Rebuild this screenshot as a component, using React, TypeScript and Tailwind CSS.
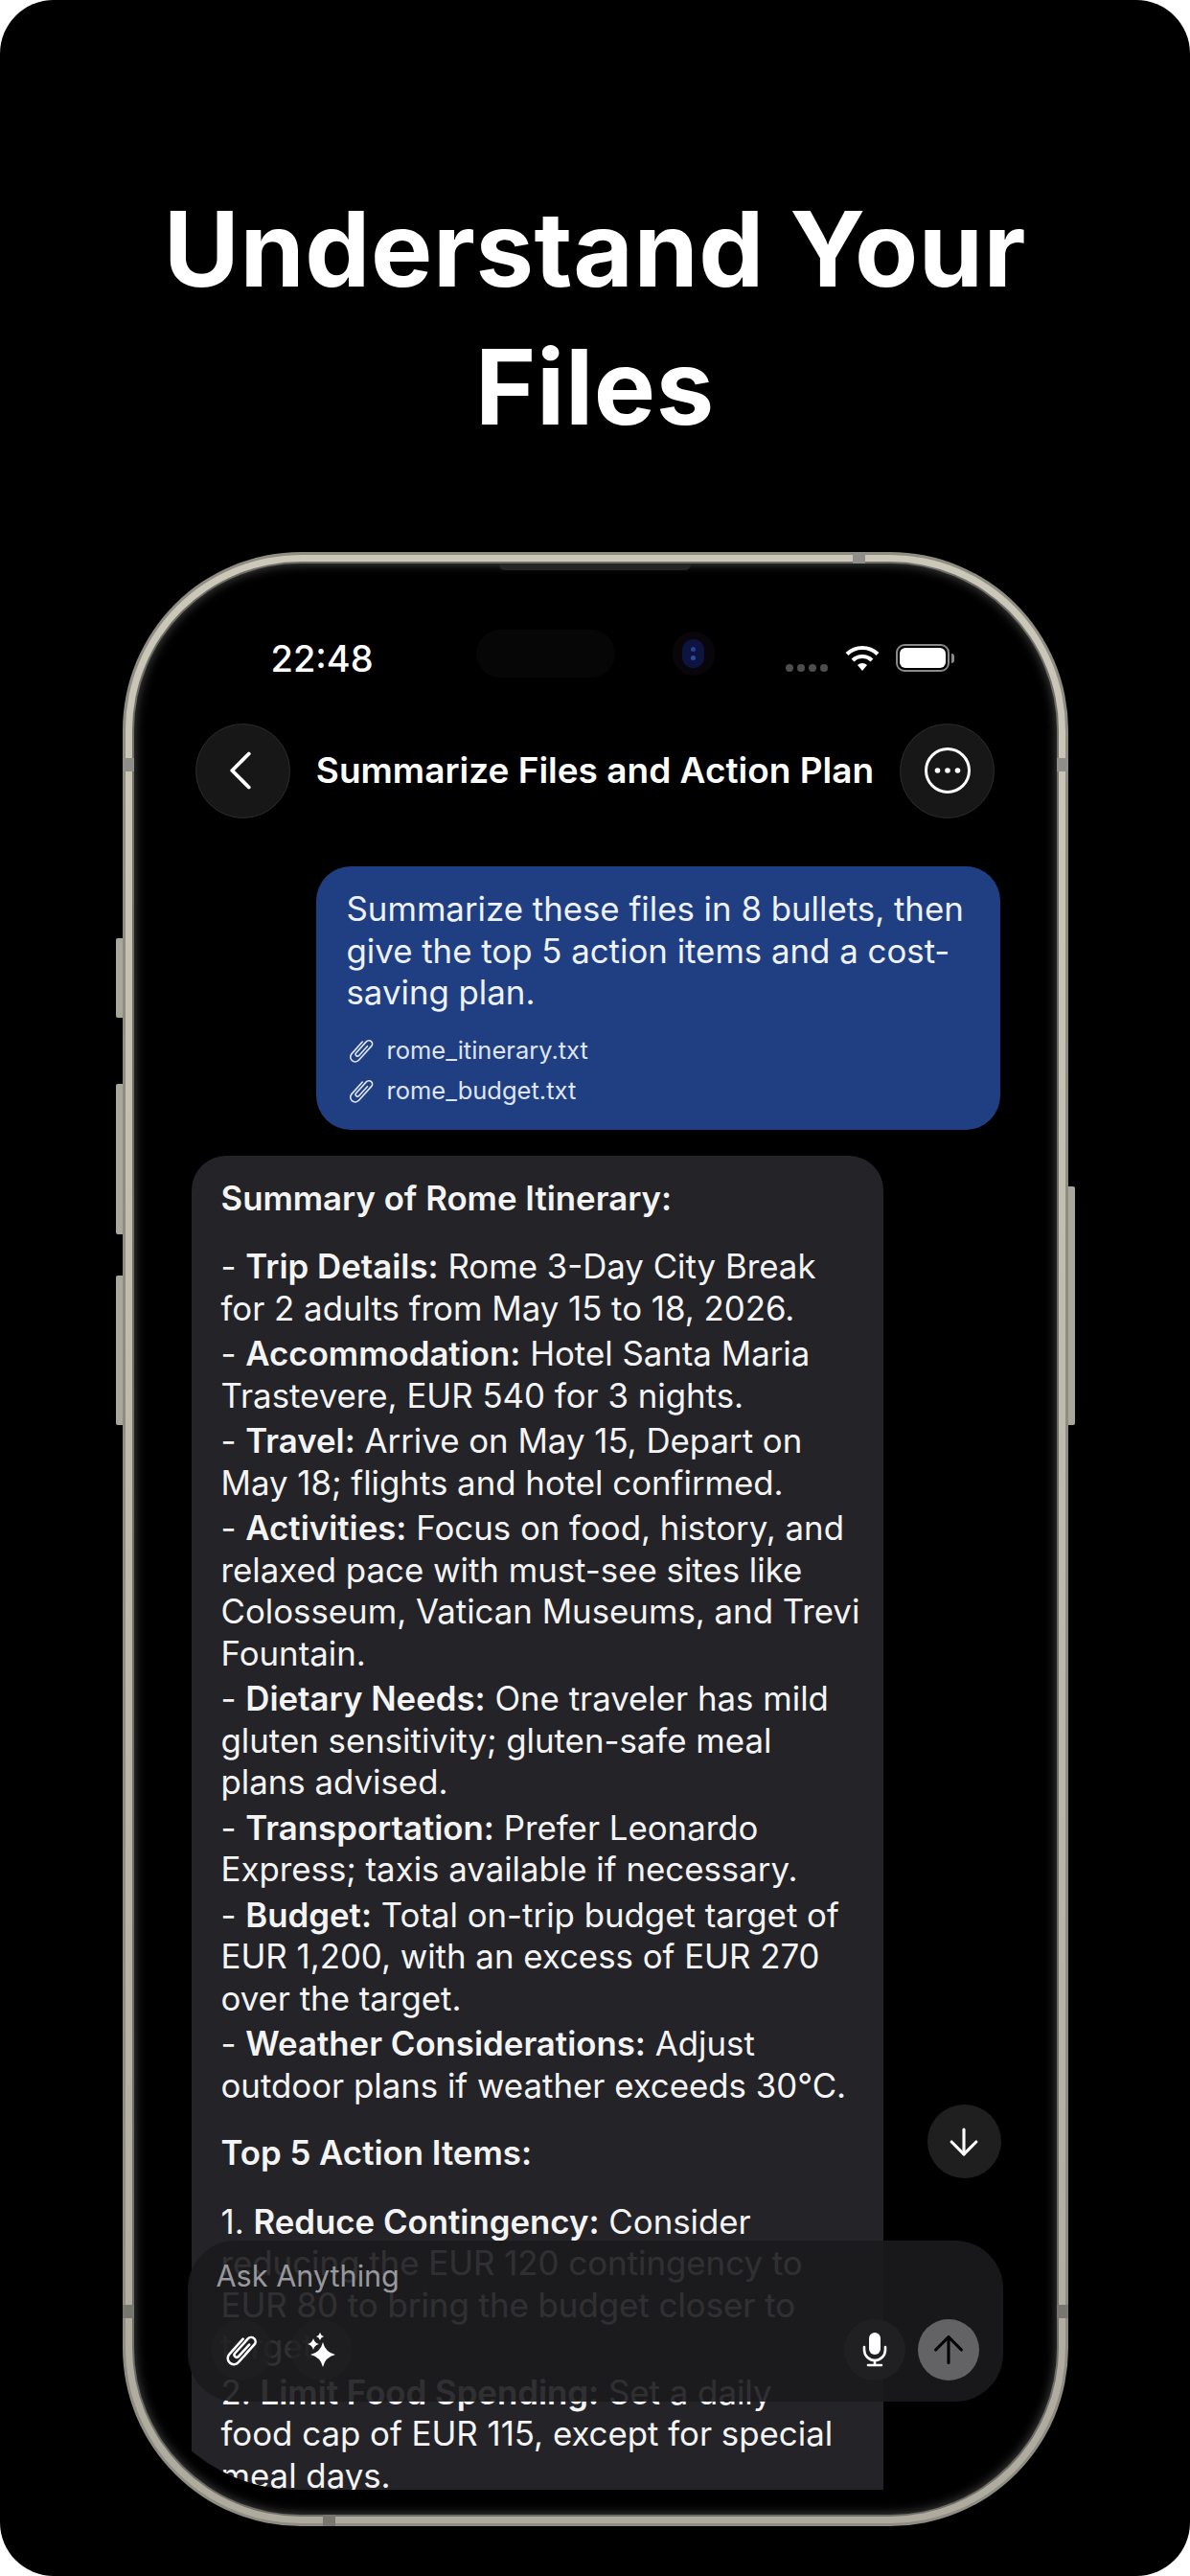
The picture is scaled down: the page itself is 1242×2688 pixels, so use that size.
import React from 'react';
import { ArrowDown, ArrowUp, ChevronLeft } from 'lucide-react';

function PaperclipIcon({ className, strokeWidth = 1.3 }: { className: string; strokeWidth?: number }) {
  return (
    <svg viewBox="0 0 24 24" fill="none" stroke="currentColor" strokeWidth={strokeWidth} strokeLinecap="round" className={className}>
      <path transform="rotate(42 12 12)" d="M13.5 6V16.5a1.6 1.6 0 0 1-3.2 0V3.7a2.85 2.85 0 0 1 5.7 0V19.5a4 4 0 0 1-8 0V6" />
    </svg>
  );
}

function SparkleIcon() {
  return (
    <svg viewBox="0 0 32 36" fill="white" className="w-[32px] h-[36px]">
      <path d="M18 10Q20.5 20.5 31 23Q20.5 25.5 18 36Q15.5 25.5 5 23Q15.5 20.5 18 10Z" />
      <path d="M8 6Q9.2 10.8 14 12Q9.2 13.2 8 18Q6.8 13.2 2 12Q6.8 10.8 8 6Z" />
      <path d="M15 0Q15.8 3.2 19 4Q15.8 4.8 15 8Q14.2 4.8 11 4Q14.2 3.2 15 0Z" />
    </svg>
  );
}

function MicIcon() {
  return (
    <svg viewBox="0 0 26 36" fill="none" className="w-[26px] h-[36px]">
      <rect x="7" y="0" width="12" height="23" rx="6" fill="white" />
      <path d="M2 15v3a11 11 0 0 0 22 0v-3" stroke="white" strokeWidth="2.6" strokeLinecap="round" />
      <path d="M13 29v4M6 34h14" stroke="white" strokeWidth="2.6" strokeLinecap="round" />
    </svg>
  );
}

function WifiIcon() {
  return (
    <svg viewBox="0 0 36 28" fill="none" stroke="white" strokeWidth="4.2" className="w-[36px] h-[28px]">
      <path d="M2 9.5a23 23 0 0 1 32 0" />
      <path d="M8 16a14.5 14.5 0 0 1 20 0" />
      <path d="M18 27l-5-6a7 7 0 0 1 10 0z" fill="white" stroke="none" />
    </svg>
  );
}

function MoreIcon() {
  return (
    <svg viewBox="0 0 50 50" fill="none" className="w-[50px] h-[50px]">
      <circle cx="25" cy="25" r="22.5" stroke="white" strokeWidth="3" />
      <circle cx="14.5" cy="25" r="2.8" fill="white" />
      <circle cx="25" cy="25" r="2.8" fill="white" />
      <circle cx="35.5" cy="25" r="2.8" fill="white" />
    </svg>
  );
}

function Item({ label, children, first }: { label: string; children: React.ReactNode; first?: boolean }) {
  return (
    <p className={first ? '' : 'mt-[4px]'}>
      - <b className="font-semibold">{label}</b> {children}
    </p>
  );
}

export default function App() {
  return (
    <div className="w-[1242px] h-[2688px] bg-white overflow-hidden">
      <div className="relative h-full bg-black rounded-[56px] flex flex-col items-center">
        <h1 className="mt-[188px] text-center text-white font-bold text-[108px] tracking-[0.6px] leading-[144px] font-['Inter',sans-serif]">
          Understand Your
          <br />
          Files
        </h1>

        <div className="relative mt-[100px] w-[987px] h-[2060px]">
          {/* side buttons */}
          <div className="absolute left-[-7px] top-[403px] w-[8px] h-[83px] rounded-l-[2px] bg-[#a9a69a]" />
          <div className="absolute left-[-7px] top-[555px] w-[8px] h-[157px] rounded-l-[2px] bg-[#a9a69a]" />
          <div className="absolute left-[-7px] top-[755px] w-[8px] h-[156px] rounded-l-[2px] bg-[#a9a69a]" />
          <div className="absolute right-[-7px] top-[662px] w-[8px] h-[249px] rounded-r-[2px] bg-[#a9a69a]" />

          {/* titanium frame */}
          <div className="relative h-full rounded-[186px] bg-[#8f8d82] p-[3px]">
            <div className="h-full rounded-[183px] bg-gradient-to-b from-[#cbc8ba] to-[#aeab9e] p-[7px]">
              <div className="h-full rounded-[176px] bg-[#6f6e66] p-[2px]">
                <div className="relative h-full rounded-[174px] bg-black flex flex-col pb-[26px] shadow-[inset_0_0_12px_rgba(255,255,255,0.3)]">
                  {/* earpiece */}
                  <div className="absolute left-[381px] top-0 w-[200px] h-[7px] rounded-b-[6px] bg-[#262624]" />

                  {/* status bar */}
                  <div className="relative h-[166px] shrink-0">
                    <span className="absolute left-[143px] top-[77px] text-white text-[38px] leading-[44px] font-medium font-['Inter',sans-serif]">22:48</span>
                    <div className="absolute left-[357px] top-[69px] w-[145px] h-[50px] rounded-full bg-[#060606]" />
                    <div className="absolute left-[562px] top-[71px] w-[44px] h-[46px] rounded-full bg-[#09060b] flex items-center justify-center">
                      <div className="w-[23px] h-[30px] rounded-full bg-[#0d1440] flex flex-col items-center justify-center gap-[4px]">
                        <div className="w-[5px] h-[5px] rounded-full bg-[#2c3f99]" />
                        <div className="w-[5px] h-[5px] rounded-full bg-[#2c4f99]" />
                      </div>
                    </div>
                    <div className="absolute left-[680px] top-[105px] flex gap-[4px]">
                      <div className="w-[8px] h-[8px] rounded-full bg-[#4d4d4d]" />
                      <div className="w-[8px] h-[8px] rounded-full bg-[#4d4d4d]" />
                      <div className="w-[8px] h-[8px] rounded-full bg-[#4d4d4d]" />
                      <div className="w-[8px] h-[8px] rounded-full bg-[#4d4d4d]" />
                    </div>
                    <div className="absolute left-[742px] top-[85px]">
                      <WifiIcon />
                    </div>
                    <div className="absolute left-[795px] top-[84px] flex items-center">
                      <div className="w-[56px] h-[29px] rounded-[9px] border-2 border-[#8a8a8a] p-[2px]">
                        <div className="h-full rounded-[6px] bg-white" />
                      </div>
                      <div className="w-[3px] h-[10px] ml-[2px] rounded-r-full bg-[#8a8a8a]" />
                    </div>
                  </div>

                  {/* header */}
                  <div className="flex items-center justify-between px-[64px] h-[100px] shrink-0">
                    <button className="w-[99px] h-[99px] rounded-full bg-[#171717] border border-[#2b2b2b] flex items-center justify-center">
                      <ChevronLeft className="w-[70px] h-[70px] shrink-0 text-white mr-[4px]" strokeWidth={1.3} />
                    </button>
                    <span className="text-white text-[37px] leading-[44px] font-semibold font-['Inter',sans-serif]">Summarize Files and Action Plan</span>
                    <button className="w-[99px] h-[99px] rounded-full bg-[#171717] border border-[#2b2b2b] flex items-center justify-center">
                      <MoreIcon />
                    </button>
                  </div>

                  {/* messages */}
                  <div className="flex-1 min-h-0 overflow-hidden rounded-b-[170px] pt-[50px] pl-[60px] pr-[59px] flex flex-col font-['Inter',sans-serif] text-[34.8px] leading-[43.5px] whitespace-nowrap">
                    <div className="self-end w-[714px] rounded-[36px] bg-[#1f3f82] pt-[23px] pb-[26px] pl-[32px] pr-[20px] text-[#eef1f8]">
                      <p>
                        Summarize these files in 8 bullets, then
                        <br />
                        give the top 5 action items and a cost-
                        <br />
                        saving plan.
                      </p>
                      <div className="mt-[23px] flex flex-col gap-[12px] text-[25.5px] leading-[30px] text-[#dfe5f2]">
                        <div className="flex items-center gap-[12px]">
                          <PaperclipIcon className="w-[30px] h-[30px]" />
                          <span>rome_itinerary.txt</span>
                        </div>
                        <div className="flex items-center gap-[12px]">
                          <PaperclipIcon className="w-[30px] h-[30px]" />
                          <span>rome_budget.txt</span>
                        </div>
                      </div>
                    </div>

                    <div className="mt-[27px] self-start w-[722px] shrink-0 rounded-t-[36px] bg-[#242428] pt-[23px] pl-[31px] pr-[30px] text-[#f4f4f5]">
                      <p className="font-semibold">Summary of Rome Itinerary:</p>
                      <div className="mt-[28px]">
                        <Item label="Trip Details:" first>
                          Rome 3-Day City Break
                          <br />
                          for 2 adults from May 15 to 18, 2026.
                        </Item>
                        <Item label="Accommodation:">
                          Hotel Santa Maria
                          <br />
                          Trastevere, EUR 540 for 3 nights.
                        </Item>
                        <Item label="Travel:">
                          Arrive on May 15, Depart on
                          <br />
                          May 18; flights and hotel confirmed.
                        </Item>
                        <Item label="Activities:">
                          Focus on food, history, and
                          <br />
                          relaxed pace with must-see sites like
                          <br />
                          Colosseum, Vatican Museums, and Trevi
                          <br />
                          Fountain.
                        </Item>
                        <Item label="Dietary Needs:">
                          One traveler has mild
                          <br />
                          gluten sensitivity; gluten-safe meal
                          <br />
                          plans advised.
                        </Item>
                        <Item label="Transportation:">
                          Prefer Leonardo
                          <br />
                          Express; taxis available if necessary.
                        </Item>
                        <Item label="Budget:">
                          Total on-trip budget target of
                          <br />
                          EUR 1,200, with an excess of EUR 270
                          <br />
                          over the target.
                        </Item>
                        <Item label="Weather Considerations:">
                          Adjust
                          <br />
                          outdoor plans if weather exceeds 30°C.
                        </Item>
                      </div>
                      <p className="mt-[27px] font-semibold">Top 5 Action Items:</p>
                      <div className="mt-[28px]">
                        <p>
                          1. <b className="font-semibold">Reduce Contingency:</b> Consider
                          <br />
                          reducing the EUR 120 contingency to
                          <br />
                          EUR 80 to bring the budget closer to
                          <br />
                          target.
                        </p>
                        <p className="mt-[4px]">
                          2. <b className="font-semibold">Limit Food Spending:</b> Set a daily
                          <br />
                          food cap of EUR 115, except for special
                          <br />
                          meal days.
                        </p>
                      </div>
                    </div>
                  </div>

                  {/* scroll down */}
                  <button className="absolute right-[58px] top-[1608px] w-[77px] h-[77px] rounded-full bg-[#1f1f1f] flex items-center justify-center">
                    <ArrowDown className="w-[44px] h-[44px] text-white" strokeWidth={1.7} />
                  </button>

                  {/* input bar */}
                  <div className="absolute left-[56px] right-[56px] bottom-[118px] h-[168px] rounded-[50px] bg-[#1b1b1d]/90 pl-[30px] pr-[25px] pt-[18px] font-['Inter',sans-serif]">
                    <p className="text-[#98989d] text-[30.6px] leading-[38px]">Ask Anything</p>
                    <div className="mt-[26px] flex items-center justify-between">
                      <div className="flex items-center gap-[19px] ml-[-6px]">
                        <div className="w-[64px] h-[64px] rounded-full bg-[#202022]/70 flex items-center justify-center text-white">
                          <PaperclipIcon className="w-[38px] h-[38px]" strokeWidth={1.6} />
                        </div>
                        <div className="w-[64px] h-[64px] rounded-full bg-[#202022]/70 flex items-center justify-center">
                          <SparkleIcon />
                        </div>
                      </div>
                      <div className="flex items-center gap-[13px]">
                        <div className="w-[64px] h-[64px] rounded-full bg-[#202022] flex items-center justify-center">
                          <MicIcon />
                        </div>
                        <div className="w-[64px] h-[64px] rounded-full bg-[#636366] flex items-center justify-center">
                          <ArrowUp className="w-[46px] h-[46px] shrink-0 text-black" strokeWidth={1.6} />
                        </div>
                      </div>
                    </div>
                  </div>
                </div>
              </div>
            </div>

            {/* antenna bands */}
            <div className="absolute left-[762px] top-0 w-[13px] h-[12px] bg-[#8f8e88]" />
            <div className="absolute left-[209px] bottom-0 w-[13px] h-[12px] bg-[#77766f]" />
            <div className="absolute left-0 top-[215px] w-[12px] h-[14px] bg-[#8f8e88]" />
            <div className="absolute right-0 top-[215px] w-[12px] h-[14px] bg-[#8f8e88]" />
            <div className="absolute left-0 top-[1829px] w-[12px] h-[14px] bg-[#77766f]" />
            <div className="absolute right-0 top-[1829px] w-[12px] h-[14px] bg-[#77766f]" />
          </div>
        </div>
      </div>
    </div>
  );
}
